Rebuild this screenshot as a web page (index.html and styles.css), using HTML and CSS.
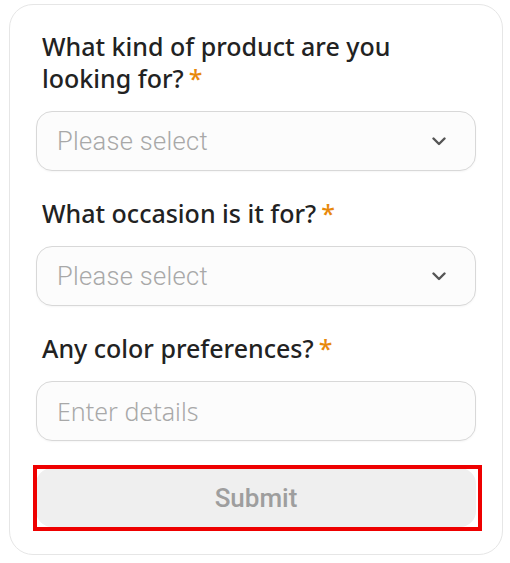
FILE: index.html
```html
<!DOCTYPE html>
<html>
<head>
<meta charset="utf-8">
<link rel="stylesheet" href="styles.css">
</head>
<body>
<div class="card">
  <div class="field">
    <div class="label">What kind of product are you looking for?<span class="req">*</span></div>
    <div class="control select">
      <span class="placeholder">Please select</span>
      <svg class="chev" width="14" height="9" viewBox="0 0 14 9"><path d="M1.5 1.5 L7 7 L12.5 1.5" fill="none" stroke="#555" stroke-width="2.4" stroke-linecap="round" stroke-linejoin="round"/></svg>
    </div>
  </div>
  <div class="field">
    <div class="label">What occasion is it for?<span class="req">*</span></div>
    <div class="control select">
      <span class="placeholder">Please select</span>
      <svg class="chev" width="14" height="9" viewBox="0 0 14 9"><path d="M1.5 1.5 L7 7 L12.5 1.5" fill="none" stroke="#555" stroke-width="2.4" stroke-linecap="round" stroke-linejoin="round"/></svg>
    </div>
  </div>
  <div class="field">
    <div class="label">Any color preferences?<span class="req">*</span></div>
    <div class="control input">
      <span class="placeholder text">Enter details</span>
    </div>
  </div>
  <div class="submit-wrap">
    <button class="submit">Submit</button>
    <div class="highlight"></div>
  </div>
</div>
</body>
</html>
```
FILE: styles.css
```css
html, body {
  margin: 0;
  padding: 0;
  background: #ffffff;
}
body {
  padding: 4px 0 0 9px;
}
.card {
  box-sizing: border-box;
  width: 494px;
  height: 551px;
  border: 1px solid #e6e6e6;
  border-radius: 24px;
  background: #fff;
  padding: 27px 26px 27px 26px;
  display: flex;
  flex-direction: column;
  gap: 28px;
}
.field {
  display: flex;
  flex-direction: column;
  gap: 15px;
}
.label {
  font-family: "Noto Sans", sans-serif;
  font-weight: 500;
  font-size: 25px;
  line-height: 32px;
  color: #222;
  padding-left: 6px;
  padding-right: 30px;
  margin-top: -2px;
  margin-bottom: 2px;
}
.req {
  color: #e8890c;
  margin-left: 5px;
}
.control {
  box-sizing: border-box;
  height: 60px;
  border: 1px solid #d8d8d8;
  border-radius: 16px;
  background: #fcfcfc;
  display: flex;
  align-items: center;
  justify-content: space-between;
  padding: 0 29px 0 20px;
  box-shadow: 0 1px 2px rgba(0,0,0,0.04);
}
.placeholder {
  font-family: Roboto, sans-serif;
  font-size: 25.5px;
  color: #a8a8a8;
  font-weight: 300;
  letter-spacing: 0.3px;
}
.placeholder.text {
  font-family: "Noto Sans", sans-serif;
  font-weight: 300;
  font-size: 25px;
  letter-spacing: 0;
}
.chev {
  display: block;
}
.submit-wrap {
  position: relative;
  margin-top: -1px;
}
.submit {
  box-sizing: border-box;
  width: 100%;
  height: 59px;
  border: none;
  border-radius: 16px;
  background: #efefef;
  font-family: Roboto, sans-serif;
  font-weight: 500;
  font-size: 26px;
  color: #9e9e9e;
  display: block;
}
.highlight {
  position: absolute;
  left: -3px;
  top: -3px;
  right: -6px;
  bottom: -4px;
  border: 4px solid #ee0000;
  pointer-events: none;
}
```
